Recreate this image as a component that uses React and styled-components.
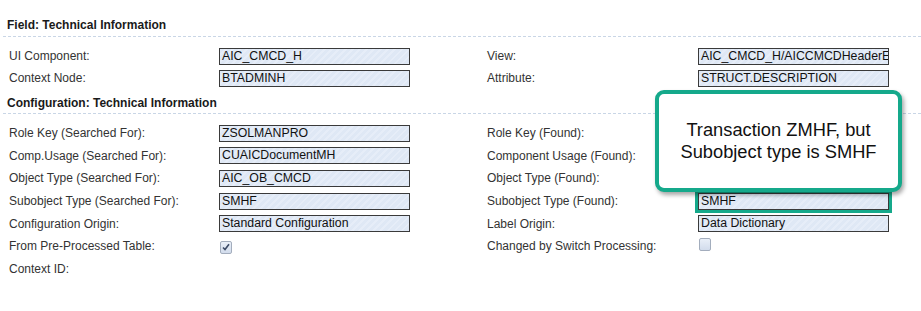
import React from "react";
import styled, { createGlobalStyle } from "styled-components";

const GlobalStyle = createGlobalStyle`
  body {
    margin: 0;
    background: #ffffff;
    font-family: "Liberation Sans", Arial, sans-serif;
  }
`;

const Page = styled.div`
  position: relative;
  width: 921px;
  height: 311px;
  overflow: hidden;
  background: #fff;
  padding-top: 18px;
  box-sizing: border-box;
`;

const SectionTitle = styled.div`
  margin: ${(p) => (p.first ? "0" : "7px")} 0 0 3px;
  padding: 0 0 ${(p) => (p.first ? "4px" : "3px")} 4px;
  font-size: 12px;
  line-height: 14px;
  font-weight: bold;
  color: #1a1a1a;
  border-bottom: 1px dashed #c9d6e6;
`;

const Grid = styled.div`
  display: grid;
  grid-template-columns: 210px 268px 211px 191px;
  grid-auto-rows: ${(p) => p.rowHeight}px;
  align-items: center;
  margin-top: 8px;
  padding-left: 9px;
`;

const Label = styled.div`
  font-size: 12px;
  color: #333;
  white-space: nowrap;
`;

const Input = styled.div`
  width: 191px;
  height: 17px;
  box-sizing: border-box;
  border: 1px solid #3a3a3a;
  background: repeating-linear-gradient(
    135deg,
    #dfe8f5 0px,
    #dfe8f5 3px,
    #e6edf8 3px,
    #e6edf8 5px
  );
  font-size: 12.3px;
  line-height: 15px;
  padding-left: 2px;
  color: #111;
  white-space: nowrap;
  overflow: hidden;
  outline: ${(p) => (p.highlight ? "3px solid #15a98b" : "none")};
  outline-offset: 0px;
`;

const Empty = styled.div``;

const CheckBox = styled.span`
  display: inline-flex;
  align-items: center;
  justify-content: center;
  width: 12px;
  height: 13px;
  margin-left: 1px;
  box-sizing: border-box;
  border: 1px solid #a3adbd;
  border-radius: 2px;
  background: linear-gradient(#e9eff8, #d2dcec);
`;

const Callout = styled.div`
  position: absolute;
  left: 655px;
  top: 90px;
  width: 247px;
  height: 102px;
  box-sizing: border-box;
  border: 4px solid #15a98b;
  border-radius: 9px;
  background: #fff;
  box-shadow: 2px 3px 4px rgba(0, 0, 0, 0.35);
  display: flex;
  align-items: center;
  justify-content: center;
  text-align: center;
  font-size: 18.3px;
  line-height: 22px;
  color: #111;
`;

const Check = ({ checked }) => (
  <CheckBox>
    {checked && (
      <svg width="8" height="8" viewBox="0 0 8 8">
        <path d="M1 4.5 L3 6.5 L7 1.2" fill="none" stroke="#3b4a66" strokeWidth="1.6" />
      </svg>
    )}
  </CheckBox>
);

// right-hand values under the callout are hidden in the screenshot
const fieldRows = [
  ["UI Component:", "AIC_CMCD_H", "View:", "AIC_CMCD_H/AICCMCDHeaderE"],
  ["Context Node:", "BTADMINH", "Attribute:", "STRUCT.DESCRIPTION"],
];

const configRows = [
  ["Role Key (Searched For):", "ZSOLMANPRO", "Role Key (Found):", ""],
  ["Comp.Usage (Searched For):", "CUAICDocumentMH", "Component Usage (Found):", ""],
  ["Object Type (Searched For):", "AIC_OB_CMCD", "Object Type (Found):", ""],
  ["Subobject Type (Searched For):", "SMHF", "Subobject Type (Found):", "SMHF", true],
  ["Configuration Origin:", "Standard Configuration", "Label Origin:", "Data Dictionary"],
];

const renderRow = ([l1, v1, l2, v2, hl]) => (
  <React.Fragment key={l1}>
    <Label>{l1}</Label>
    <Input>{v1}</Input>
    <Label>{l2}</Label>
    <Input highlight={hl}>{v2}</Input>
  </React.Fragment>
);

export default function App() {
  return (
    <Page>
      <GlobalStyle />
      <SectionTitle first>Field: Technical Information</SectionTitle>
      <Grid rowHeight={22}>{fieldRows.map(renderRow)}</Grid>
      <SectionTitle>Configuration: Technical Information</SectionTitle>
      <Grid rowHeight={22.6}>
        {configRows.map(renderRow)}
        <Label>From Pre-Processed Table:</Label>
        <div>
          <Check checked />
        </div>
        <Label>Changed by Switch Processing:</Label>
        <div>
          <Check />
        </div>
        <Label>Context ID:</Label>
        <Empty />
      </Grid>
      <Callout>
        Transaction ZMHF, but
        <br />
        Subobject type is SMHF
      </Callout>
    </Page>
  );
}
